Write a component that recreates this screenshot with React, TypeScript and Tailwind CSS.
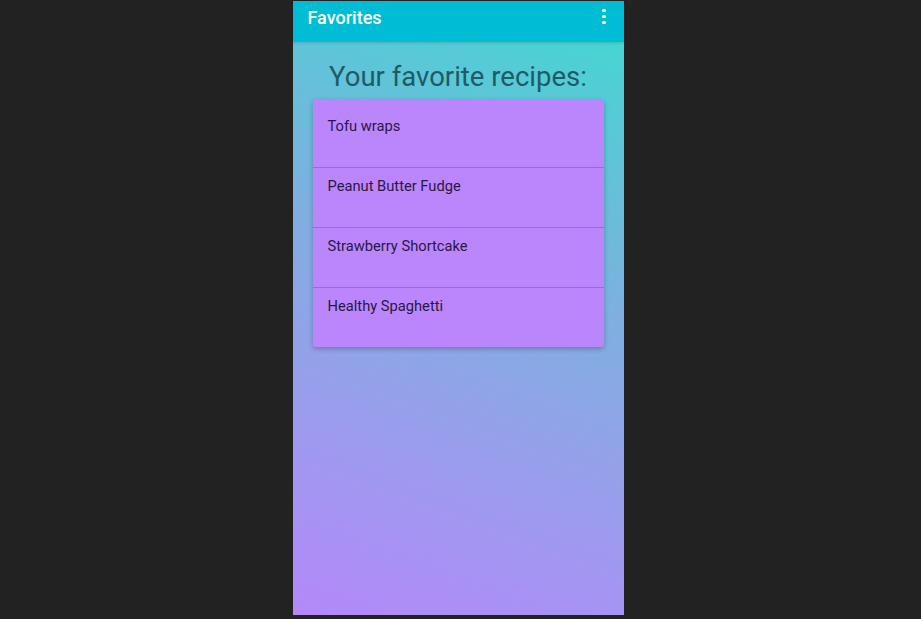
const recipes = ["Tofu wraps", "Peanut Butter Fudge", "Strawberry Shortcake", "Healthy Spaghetti"];

export default function App() {
  return (
    <div className="w-[921px] h-[619px] bg-[#222222] flex justify-center pt-px" style={{ fontFamily: "Roboto, 'Noto Sans', sans-serif" }}>
      <div className="w-[331px] h-[614px] ml-[-5px] flex flex-col bg-[linear-gradient(20deg,#b488fa_0%,#9a9ded_30%,#80aee0_55%,#55cbd6_85%,#3ddccd_100%)]">
        <div className="h-[41px] bg-[#00bcd4] flex items-center justify-between pl-[15px] pr-[18px] shadow-[0_1px_3px_rgba(0,0,0,0.15)]">
          <span className="text-white text-[18px] font-medium pb-[9px]">Favorites</span>
          <div className="flex flex-col gap-[2.5px] pb-[10px]">
            <span className="w-[3.5px] h-[3.5px] rounded-full bg-white" />
            <span className="w-[3.5px] h-[3.5px] rounded-full bg-white" />
            <span className="w-[3.5px] h-[3.5px] rounded-full bg-white" />
          </div>
        </div>
        <h1 className="text-center text-[27.5px] leading-[32px] text-[#1d5c66] mt-[19px]">Your favorite recipes:</h1>
        <ul className="mx-[20px] mt-[6px] bg-[#bb86fc] rounded-[3px] pt-[8px] shadow-[0_2px_5px_rgba(0,0,0,0.25)]">
          {recipes.map((r, i) => (
            <li key={r} className={`h-[60px] px-[15px] text-[14.7px] leading-[18px] text-[#2a1746] ${i > 0 ? "pt-[9px] border-t border-[#9b6cd4]" : "pt-[10px]"}`}>
              {r}
            </li>
          ))}
        </ul>
      </div>
    </div>
  );
}
